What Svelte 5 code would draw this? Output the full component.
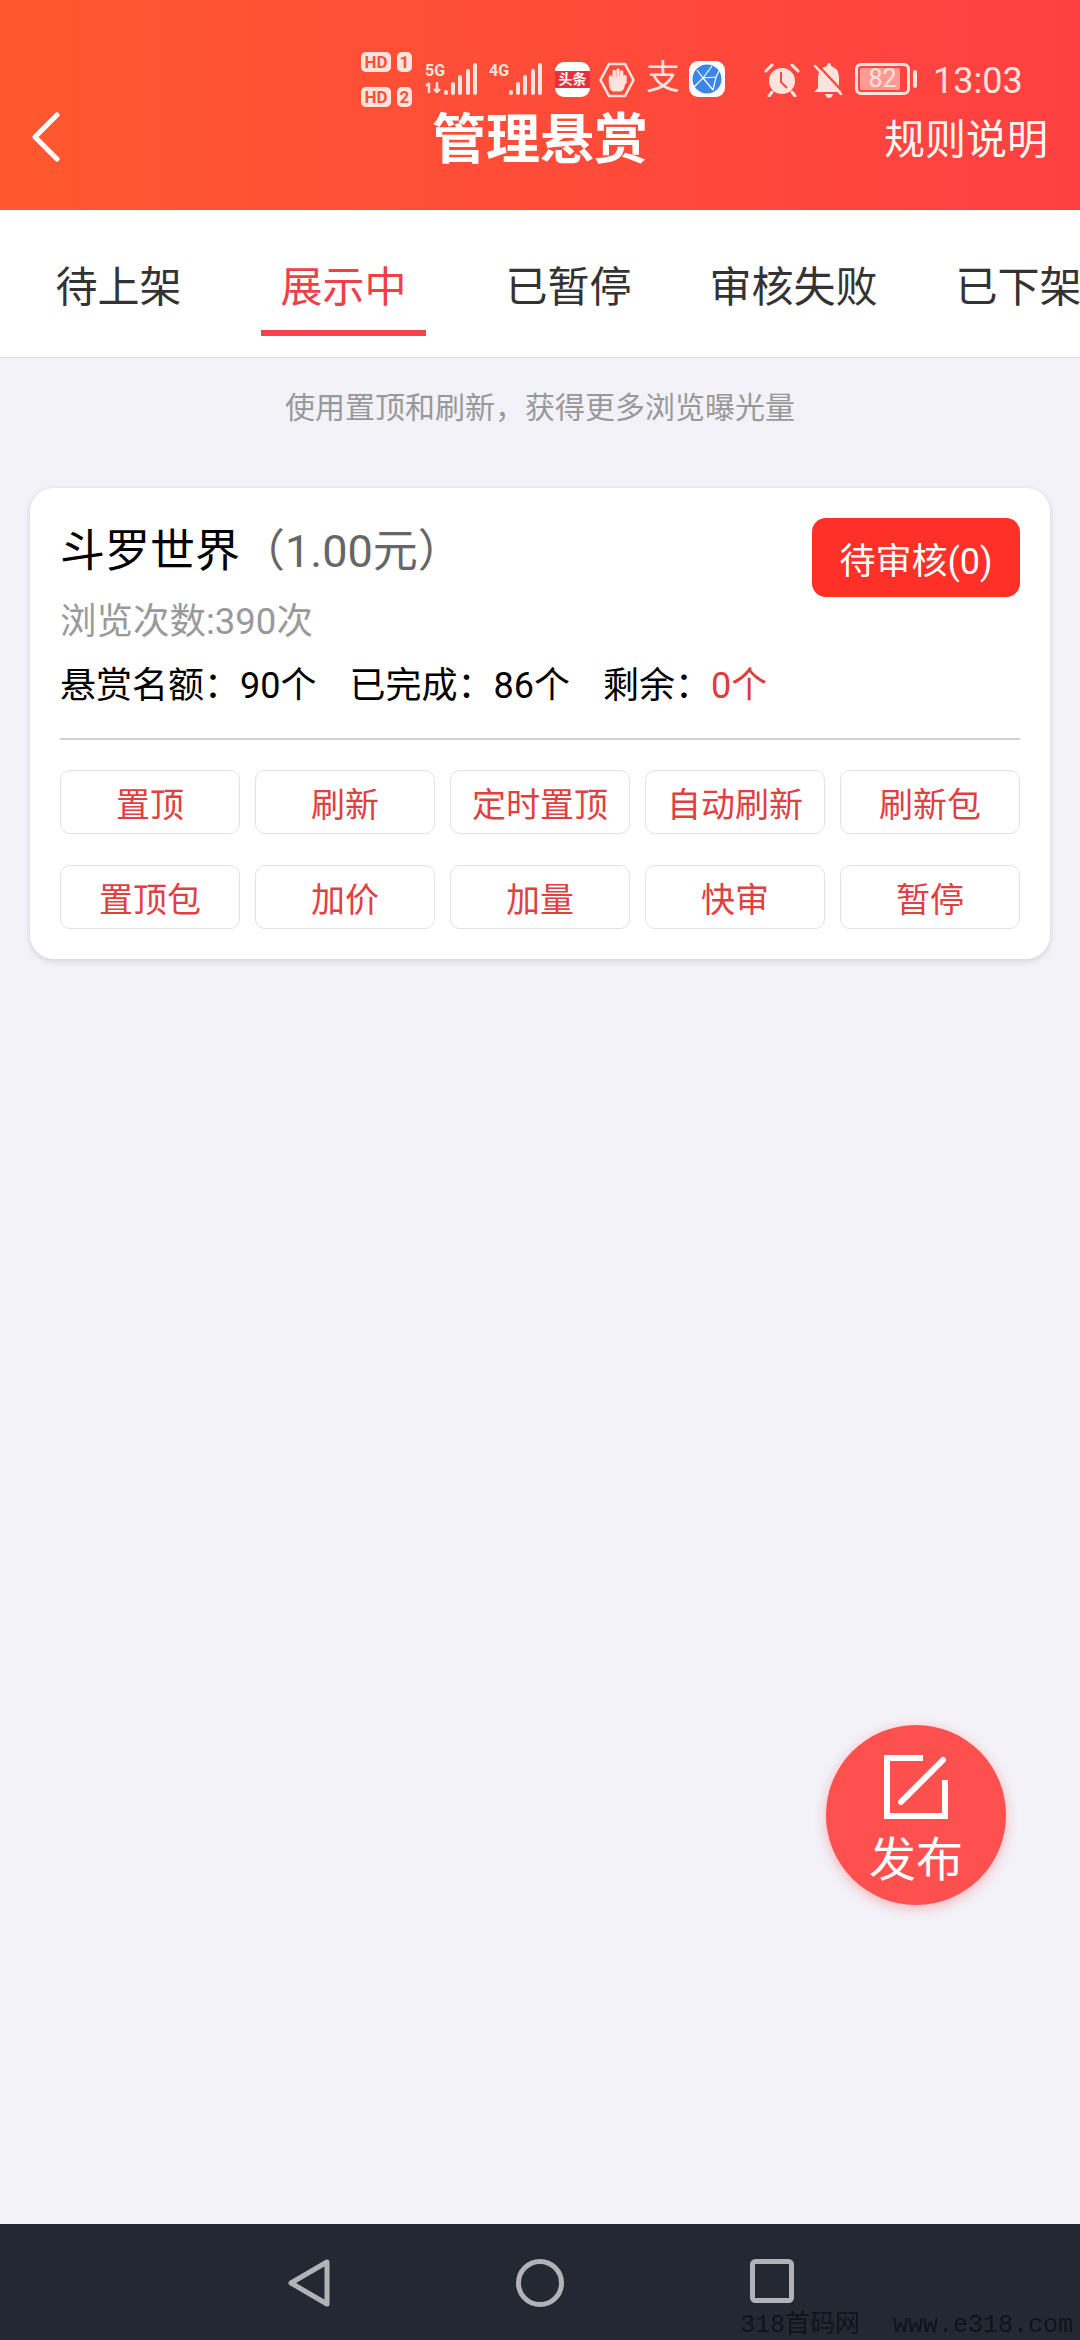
<script>
  const tabs = ["待上架", "展示中", "已暂停", "审核失败", "已下架"];
  const active = 1;
  const actions = ["置顶", "刷新", "定时置顶", "自动刷新", "刷新包", "置顶包", "加价", "加量", "快审", "暂停"];
</script>

<div class="page">
  <header class="top">
    <div class="status">
      <div class="sims">
        <div class="sim"><span class="hd">HD</span><span class="num">1</span></div>
        <div class="sim"><span class="hd">HD</span><span class="num">2</span></div>
      </div>
      <div class="net">
        <span class="gen">5G</span>
        <svg class="arrows" width="17" height="11" viewBox="0 0 17 11">
          <path d="M4 11V1M1 4l3-3M12 0v10M9 7l3 3 3-3" fill="none" stroke="currentColor" stroke-width="2.4" />
        </svg>
      </div>
      <svg class="bars" width="33" height="33" viewBox="0 0 33 33">
        <rect x="0" y="27" width="4" height="5" rx="2" />
        <rect x="7" y="19" width="4" height="13" rx="2" />
        <rect x="14" y="12" width="4" height="20" rx="2" />
        <rect x="22" y="6" width="4" height="26" rx="2" />
        <rect x="29" y="0" width="4" height="32" rx="2" />
      </svg>
      <div class="net net2"><span class="gen">4G</span></div>
      <svg class="bars bars2" width="33" height="33" viewBox="0 0 33 33">
        <rect x="0" y="27" width="4" height="5" rx="2" />
        <rect x="7" y="19" width="4" height="13" rx="2" />
        <rect x="14" y="12" width="4" height="20" rx="2" />
        <rect x="22" y="6" width="4" height="26" rx="2" />
        <rect x="29" y="0" width="4" height="32" rx="2" />
      </svg>
      <div class="toutiao"><span>头条</span></div>
      <svg class="hand" width="36" height="36" viewBox="0 0 36 36">
        <path d="M10 2h16l8.500 16L26 34H10L1.500 18z" fill="none" stroke="currentColor" stroke-width="2.600" stroke-linejoin="round" />
        <path d="M10 15v7q0 6 4 7.500h8q4-2 4-8v-6.500z" fill="currentColor" />
        <path d="M11.500 15v6M15.200 9.500v10M19 8v11.500M22.700 10v10M26 14.500v6" stroke="currentColor" stroke-width="3.400" stroke-linecap="round" />
      </svg>
      <span class="ali">支</span>
      <svg class="globe" width="36" height="36" viewBox="0 0 36 36">
        <rect width="36" height="36" rx="9" fill="#fff" />
        <circle cx="18" cy="18" r="14.500" fill="#3c87e6" />
        <path d="M8 9l6 8 9-12M14 17l-9 9M14 17l10 12M14 17l13-1 3-6M27 16l-3 13" fill="none" stroke="#fff" stroke-width="1.200" />
      </svg>
      <svg class="alarm" width="36" height="34" viewBox="0 0 36 34">
        <circle cx="18" cy="18" r="13" fill="currentColor" />
        <path d="M17 9v10l6 6" fill="none" stroke="#ff4a3a" stroke-width="2" />
        <path d="M2 8l6-6M28 2l6 6M8 29l-3 4M28 29l3 4" stroke="currentColor" stroke-width="3" stroke-linecap="round" />
      </svg>
      <svg class="bell" width="33" height="35" viewBox="0 0 33 35">
        <path d="M15 3v-1q0-2 2-2t2 2v1q7 2 8 10v12l4 4H2l4-4V13q1-8 9-10z" fill="currentColor" />
        <path d="M13 31h8q-1 4-4 4t-4-4z" fill="currentColor" />
        <path d="M5 1l26 28" stroke="#ff4a3a" stroke-width="2.500" />
        <path d="M3 3l26 28" stroke="currentColor" stroke-width="2.500" stroke-linecap="round" />
      </svg>
      <div class="battery"><span class="level"></span><span class="pct">82</span></div>
      <span class="nub"></span>
      <span class="time">13:03</span>
    </div>
    <div class="titlebar">
      <svg class="back" width="30" height="50" viewBox="0 0 30 50">
        <path d="M26 3L4 25l22 22" fill="none" stroke="#fff" stroke-width="5" stroke-linecap="round" stroke-linejoin="round" />
      </svg>
      <h1>管理悬赏</h1>
      <span class="rules">规则说明</span>
    </div>
  </header>

  <nav class="tabs">
    {#each tabs as tab, i}
      <div class="tab" class:on={i === active}>{tab}</div>
    {/each}
  </nav>

  <main class="content">
    <p class="hint">使用置顶和刷新，获得更多浏览曝光量</p>
    <section class="card">
      <div class="head">
        <div class="info">
          <div class="name">斗罗世界<span class="price">（1.00元）</span></div>
          <div class="views">浏览次数:390次</div>
          <div class="counts">
            <span>悬赏名额：90个</span>
            <span>已完成：86个</span>
            <span>剩余：<em>0个</em></span>
          </div>
        </div>
        <button class="review">待审核(0)</button>
      </div>
      <div class="actions">
        {#each actions as action}
          <button class="action">{action}</button>
        {/each}
      </div>
    </section>
  </main>

  <button class="fab">
    <svg width="64" height="64" viewBox="0 0 64 64">
      <path d="M39 3H3v58h58V25" fill="none" stroke="#fff" stroke-width="6" />
      <path d="M17 47L59 5" fill="none" stroke="#fff" stroke-width="6" stroke-linecap="round" />
    </svg>
    <span>发布</span>
  </button>

  <footer class="sysnav">
    <svg width="42" height="48" viewBox="0 0 42 48">
      <path d="M39 3v42L3 24z" fill="none" stroke="#b1b3b7" stroke-width="5" stroke-linejoin="round" />
    </svg>
    <svg width="48" height="48" viewBox="0 0 48 48">
      <circle cx="24" cy="24" r="21.500" fill="none" stroke="#b1b3b7" stroke-width="5" />
    </svg>
    <svg width="44" height="44" viewBox="0 0 44 44">
      <rect x="2.500" y="2.500" width="39" height="39" rx="3" fill="none" stroke="#b1b3b7" stroke-width="5" />
    </svg>
  </footer>
  <div class="mark">318首码网<i></i>www.e318.com</div>
</div>

<style>
  :global(body) {
    margin: 0;
    background: #f2f2f8;
  }

  .page {
    position: relative;
    width: 1080px;
    height: 2340px;
    overflow: hidden;
    display: flex;
    flex-direction: column;
    font-family: Roboto, "Noto Sans CJK SC", sans-serif;
    color: #000;
  }

  .top {
    height: 210px;
    box-sizing: border-box;
    padding-top: 52px;
    background: linear-gradient(90deg, #ff582f, #ff4042);
    color: #ffe3df;
    flex: none;
  }

  .status {
    height: 56px;
    padding-left: 361px;
    display: flex;
    align-items: flex-start;
  }

  .sims {
    width: 51px;
    display: flex;
    flex-direction: column;
    gap: 15px;
  }

  .sim {
    display: flex;
    gap: 6px;
    height: 20px;
  }

  .hd, .num {
    background: #ffe3df;
    color: #ff5232;
    border-radius: 5px;
    font-size: 17px;
    font-weight: 700;
    line-height: 20px;
    text-align: center;
  }

  .hd {
    width: 30px;
  }

  .num {
    width: 15px;
  }

  .net {
    width: 20px;
    margin: 12px 0 0 13px;
    display: flex;
    flex-direction: column;
    gap: 5px;
  }

  .net2 {
    margin-left: 12px;
  }

  .gen {
    font-size: 16px;
    font-weight: 700;
    line-height: 13px;
  }

  .arrows {
    display: block;
  }

  .bars {
    fill: currentColor;
    margin: 11px 0 0 -1px;
    flex: none;
  }

  .bars2 {
    margin-left: 0;
  }

  .toutiao {
    width: 35px;
    height: 35px;
    margin: 10px 0 0 13px;
    border-radius: 9px;
    background: #fff;
    display: flex;
    align-items: center;
    flex: none;
  }

  .toutiao span {
    width: 100%;
    height: 17px;
    background: #e8303a;
    color: #fff;
    font-size: 14px;
    font-weight: 700;
    line-height: 17px;
    text-align: center;
    white-space: nowrap;
  }

  .hand {
    margin: 10px 0 0 9px;
    flex: none;
  }

  .ali {
    width: 34px;
    margin: 5px 0 0 11px;
    font-size: 34px;
    line-height: 40px;
    font-weight: 400;
    text-align: center;
  }

  .globe {
    margin: 9px 0 0 9px;
    flex: none;
  }

  .alarm {
    margin: 11px 0 0 39px;
    flex: none;
  }

  .bell {
    margin: 11px 0 0 12px;
    flex: none;
  }

  .battery {
    position: relative;
    width: 55px;
    height: 32px;
    box-sizing: border-box;
    margin: 11px 0 0 10px;
    border: 3px solid #ffe3df;
    border-radius: 6px;
    flex: none;
  }

  .level {
    display: block;
    width: 40px;
    height: 22px;
    margin: 2px;
    border-radius: 2px;
    background: #ff9a94;
  }

  .pct {
    position: absolute;
    inset: 0;
    font-size: 25px;
    line-height: 26px;
    text-align: center;
  }

  .nub {
    width: 4px;
    height: 18px;
    margin: 18px 0 0 3px;
    border-radius: 2px;
    background: #ffe3df;
    flex: none;
  }

  .time {
    margin: 8px 0 0 16px;
    font-size: 36px;
    line-height: 42px;
    white-space: nowrap;
  }

  .titlebar {
    height: 58px;
    display: grid;
    grid-template-columns: 1fr auto 1fr;
    align-items: center;
    color: #fff;
  }

  .back {
    margin: -4px 0 0 31px;
  }

  h1 {
    margin: 4px 0 0;
    font-size: 54px;
    font-weight: 700;
    line-height: 58px;
  }

  .rules {
    justify-self: end;
    margin-top: 2px;
    padding-right: 32px;
    font-size: 41px;
    line-height: 58px;
    opacity: 0.95;
  }

  .tabs {
    height: 148px;
    box-sizing: border-box;
    padding-left: 6px;
    display: flex;
    background: #fff;
    border-bottom: 1px solid #dcdcdc;
    flex: none;
  }

  .tab {
    position: relative;
    width: 225px;
    flex: none;
    padding-top: 53px;
    font-size: 42px;
    line-height: 50px;
    color: #333;
    text-align: center;
    white-space: nowrap;
    box-sizing: border-box;
  }

  .tab.on {
    color: #ee4049;
  }

  .tab.on::after {
    content: "";
    position: absolute;
    left: 30px;
    top: 120px;
    width: 165px;
    height: 6px;
    background: #f4434a;
  }

  .content {
    flex: 1;
    padding: 0 30px;
  }

  .hint {
    margin: 0;
    padding: 30px 0 60px;
    font-size: 30px;
    line-height: 40px;
    color: #999;
    text-align: center;
  }

  .card {
    height: 471px;
    box-sizing: border-box;
    padding: 30px 30px 0;
    background: #fff;
    border-radius: 24px;
    box-shadow: 0 2px 6px rgba(0, 0, 0, 0.14);
  }

  .head {
    height: 187px;
    display: flex;
    justify-content: space-between;
    align-items: flex-start;
    border-bottom: 2px solid #d2d2d2;
    padding-bottom: 33px;
  }

  .name {
    margin-top: 4px;
    font-size: 45px;
    line-height: 60px;
  }

  .price {
    color: #666;
  }

  .views {
    margin-top: 20px;
    font-size: 36.500px;
    line-height: 40px;
    color: #999;
  }

  .counts {
    margin-top: 24px;
    display: flex;
    gap: 33px;
    font-size: 36px;
    line-height: 40px;
  }

  em {
    font-style: normal;
    color: #e03a3f;
  }

  button {
    font-family: inherit;
    padding: 0;
  }

  .review {
    width: 208px;
    height: 79px;
    border: 0;
    border-radius: 14px;
    background: #ff3028;
    color: #fff;
    font-size: 36px;
  }

  .actions {
    margin-top: 30px;
    display: grid;
    grid-template-columns: repeat(5, 1fr);
    gap: 31px 15px;
  }

  .action {
    height: 64px;
    border: 1px solid #e2e2e2;
    border-radius: 10px;
    background: #fff;
    color: #e04040;
    font-size: 34px;
    white-space: nowrap;
  }

  .fab {
    position: absolute;
    left: 826px;
    top: 1725px;
    width: 180px;
    height: 180px;
    border: 0;
    border-radius: 50%;
    background: #ff5050;
    box-shadow: 0 3px 12px rgba(255, 80, 80, 0.4);
    color: #fff;
    display: flex;
    flex-direction: column;
    align-items: center;
    padding-top: 30px;
    box-sizing: border-box;
  }

  .fab svg {
    display: block;
  }

  .fab span {
    margin-top: 11px;
    font-size: 47px;
    line-height: 60px;
  }

  .sysnav {
    height: 116px;
    background: #232833;
    flex: none;
    box-sizing: border-box;
    padding: 35px 0 0 288px;
    display: flex;
    align-items: flex-start;
    gap: 186px;
  }

  .sysnav svg {
    flex: none;
  }

  .mark {
    position: absolute;
    left: 740px;
    top: 2312px;
    display: flex;
    font-family: "Liberation Mono", "Noto Sans CJK SC", monospace;
    font-size: 25px;
    line-height: 27px;
    color: #10131a;
    white-space: nowrap;
  }

  .mark i {
    width: 33px;
  }
</style>
